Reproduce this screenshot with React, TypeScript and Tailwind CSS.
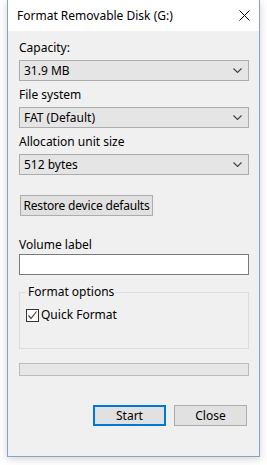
import React from "react";

const Chevron = () => (
  <svg width="9" height="5" viewBox="0 0 9 5" className="shrink-0">
    <path d="M0.5 0.5 L4.5 4.5 L8.5 0.5" fill="none" stroke="#404040" strokeWidth="1.1" />
  </svg>
);

const Dropdown = ({ value }: { value: string }) => (
  <div className="w-[230px] h-[21px] bg-[#e5e5e5] border border-[#acacac] flex items-center justify-between pl-[4px] pr-[6px]">
    <span>{value}</span>
    <Chevron />
  </div>
);

const Label = ({ children }: { children: React.ReactNode }) => (
  <div className="h-[16px] leading-[16px]">{children}</div>
);

export default function App() {
  return (
    <div className="w-[267px] h-[465px] bg-white pl-[7px]" style={{ fontFamily: '"Noto Sans", sans-serif' }}>
      <div className="w-[253px] h-[457px] border-x border-b border-[#7fa6c8] bg-[#f0f0f0] text-[12px] text-black shadow-[0_2px_8px_rgba(0,0,0,0.18)] flex flex-col">
        {/* title bar */}
        <div className="h-[31px] bg-white flex items-center justify-between pl-[9px] pr-[8px] shrink-0">
          <span className="leading-[16px]">Format Removable Disk (G:)</span>
          <svg width="11" height="11" viewBox="0 0 11 11" className="mr-[1px]">
            <path d="M0.5 0.5 L10.5 10.5 M10.5 0.5 L0.5 10.5" stroke="#000" strokeWidth="1" />
          </svg>
        </div>

        <div className="pl-[11px] pt-[9px] flex flex-col">
          <Label>Capacity:</Label>
          <div className="mt-[4px]">
            <Dropdown value="31.9 MB" />
          </div>
          <div className="mt-[6px]">
            <Label>File system</Label>
          </div>
          <div className="mt-[4px]">
            <Dropdown value="FAT (Default)" />
          </div>
          <div className="mt-[6px]">
            <Label>Allocation unit size</Label>
          </div>
          <div className="mt-[4px]">
            <Dropdown value="512 bytes" />
          </div>

          <button className="mt-[20px] ml-[1px] w-[133px] h-[21px] bg-[#e1e1e1] border border-[#adadad] flex items-center justify-center leading-[16px] tracking-[-0.2px]">
            Restore device defaults
          </button>

          <div className="mt-[21px]">
            <Label>Volume label</Label>
          </div>
          <div className="mt-[1px] w-[230px] h-[21px] bg-white border border-[#7a7a7a]" />

          {/* group box */}
          <div className="relative w-[230px] h-[57px] border border-[#dcdcdc] mt-[17px]">
            <span className="absolute left-[7px] top-[-9px] bg-[#f0f0f0] px-[1px] leading-[16px]">Format options</span>
            <div className="flex items-center mt-[14px] ml-[6px]">
              <div className="w-[13px] h-[13px] bg-white border border-[#333333] flex items-center justify-center">
                <svg width="11" height="11" viewBox="0 0 11 11">
                  <path d="M1.5 5.5 L4 8.5 L9.5 1.5" fill="none" stroke="#444" strokeWidth="1.2" />
                </svg>
              </div>
              <span className="ml-[2px] leading-[16px]">Quick Format</span>
            </div>
          </div>

          {/* progress bar */}
          <div className="mt-[14px] w-[230px] h-[13px] bg-[#e6e6e6] border border-[#bcbcbc]" />

          <div className="mt-[29px] flex pl-[74px] gap-[8px]">
            <button className="w-[73px] h-[21px] bg-[#e1e1e1] border-2 border-[#0078d7] flex items-center justify-center leading-[16px]">
              Start
            </button>
            <button className="w-[73px] h-[21px] bg-[#e1e1e1] border border-[#adadad] flex items-center justify-center leading-[16px]">
              Close
            </button>
          </div>
        </div>
      </div>
    </div>
  );
}
